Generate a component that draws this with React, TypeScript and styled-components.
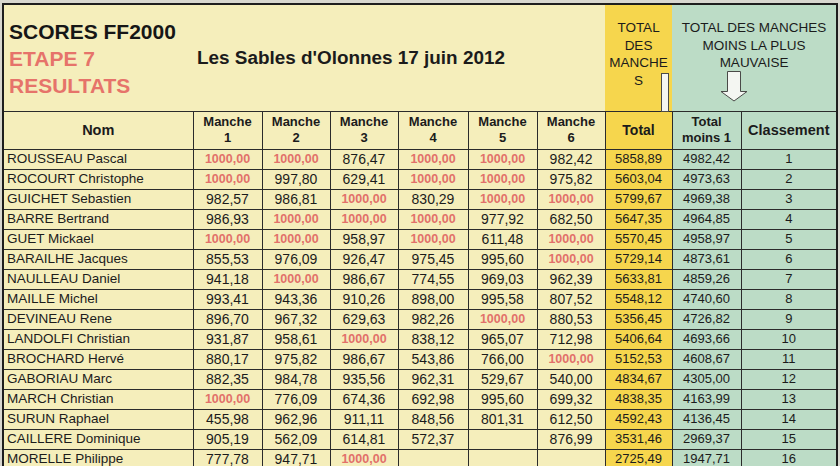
import React from "react";
import styled, { createGlobalStyle } from "styled-components";

type Tone = "paper" | "gold" | "mint";

const tones: Record<Tone, string> = {
  paper: "#f5eebb",
  gold: "#f6d64d",
  mint: "#bcdcc6",
};

const red = "#e2716a";

type Row = {
  name: string;
  manches: string[];
  total: string;
  moins: string;
  rank: number;
};

const rows: Row[] = [
  { name: "ROUSSEAU Pascal", manches: ["1000,00", "1000,00", "876,47", "1000,00", "1000,00", "982,42"], total: "5858,89", moins: "4982,42", rank: 1 },
  { name: "ROCOURT Christophe", manches: ["1000,00", "997,80", "629,41", "1000,00", "1000,00", "975,82"], total: "5603,04", moins: "4973,63", rank: 2 },
  { name: "GUICHET Sebastien", manches: ["982,57", "986,81", "1000,00", "830,29", "1000,00", "1000,00"], total: "5799,67", moins: "4969,38", rank: 3 },
  { name: "BARRE Bertrand", manches: ["986,93", "1000,00", "1000,00", "1000,00", "977,92", "682,50"], total: "5647,35", moins: "4964,85", rank: 4 },
  { name: "GUET Mickael", manches: ["1000,00", "1000,00", "958,97", "1000,00", "611,48", "1000,00"], total: "5570,45", moins: "4958,97", rank: 5 },
  { name: "BARAILHE Jacques", manches: ["855,53", "976,09", "926,47", "975,45", "995,60", "1000,00"], total: "5729,14", moins: "4873,61", rank: 6 },
  { name: "NAULLEAU Daniel", manches: ["941,18", "1000,00", "986,67", "774,55", "969,03", "962,39"], total: "5633,81", moins: "4859,26", rank: 7 },
  { name: "MAILLE Michel", manches: ["993,41", "943,36", "910,26", "898,00", "995,58", "807,52"], total: "5548,12", moins: "4740,60", rank: 8 },
  { name: "DEVINEAU Rene", manches: ["896,70", "967,32", "629,63", "982,26", "1000,00", "880,53"], total: "5356,45", moins: "4726,82", rank: 9 },
  { name: "LANDOLFI Christian", manches: ["931,87", "958,61", "1000,00", "838,12", "965,07", "712,98"], total: "5406,64", moins: "4693,66", rank: 10 },
  { name: "BROCHARD Hervé", manches: ["880,17", "975,82", "986,67", "543,86", "766,00", "1000,00"], total: "5152,53", moins: "4608,67", rank: 11 },
  { name: "GABORIAU Marc", manches: ["882,35", "984,78", "935,56", "962,31", "529,67", "540,00"], total: "4834,67", moins: "4305,00", rank: 12 },
  { name: "MARCH Christian", manches: ["1000,00", "776,09", "674,36", "692,98", "995,60", "699,32"], total: "4838,35", moins: "4163,99", rank: 13 },
  { name: "SURUN Raphael", manches: ["455,98", "962,96", "911,11", "848,56", "801,31", "612,50"], total: "4592,43", moins: "4136,45", rank: 14 },
  { name: "CAILLERE Dominique", manches: ["905,19", "562,09", "614,81", "572,37", "", "876,99"], total: "3531,46", moins: "2969,37", rank: 15 },
  { name: "MORELLE Philippe", manches: ["777,78", "947,71", "1000,00", "", "", ""], total: "2725,49", moins: "1947,71", rank: 16 },
];

const widths = [190, 69, 68, 68, 70, 69, 68, 67, 69, 96];

const App: React.FC = () => {
  return (
    <Page>
      <GlobalStyle />
      <Sheet>
        <colgroup>
          {widths.map((w, i) => (
            <col key={i} style={{ width: w }} />
          ))}
        </colgroup>
        <tbody>
          <TitleRow>
            <TitleCell>
              <Heading>SCORES FF2000</Heading>
              <Heading $red>ETAPE 7</Heading>
              <Heading $red>RESULTATS</Heading>
            </TitleCell>
            <PlaceCell colSpan={6}>Les Sables d'Olonnes 17 juin 2012</PlaceCell>
            <NoteCell $tone="gold">
              TOTAL
              <br />
              DES
              <br />
              MANCHE
              <br />S
              <Bar />
            </NoteCell>
            <NoteCell $tone="mint" colSpan={2}>
              TOTAL DES MANCHES
              <br />
              MOINS LA PLUS
              <br />
              MAUVAISE
              <DownArrow viewBox="0 0 28 31">
                <path
                  d="M7.5 0.5 H20.5 V20.5 H27 L14 30 L1 20.5 H7.5 Z"
                  fill="#f4f6f2"
                  stroke="#4a4a48"
                  strokeWidth="1"
                />
              </DownArrow>
            </NoteCell>
          </TitleRow>
          <HeadRow>
            <HeadCell $size={14.5}>Nom</HeadCell>
            {[1, 2, 3, 4, 5, 6].map((n) => (
              <HeadCell key={n}>
                Manche
                <br />
                {n}
              </HeadCell>
            ))}
            <HeadCell $tone="gold" $size={14}>
              Total
            </HeadCell>
            <HeadCell $tone="mint">
              Total
              <br />
              moins 1
            </HeadCell>
            <HeadCell $tone="mint" $size={14.5}>
              Classement
            </HeadCell>
          </HeadRow>
          {rows.map((r) => (
            <DataRow key={r.rank}>
              <NameCell>{r.name}</NameCell>
              {r.manches.map((m, i) => (
                <NumCell key={i} $best={m === "1000,00"}>
                  {m}
                </NumCell>
              ))}
              <NumCell $tone="gold" $small>
                {r.total}
              </NumCell>
              <NumCell $tone="mint" $small>
                {r.moins}
              </NumCell>
              <NumCell $tone="mint" $small>
                {r.rank}
              </NumCell>
            </DataRow>
          ))}
        </tbody>
      </Sheet>
    </Page>
  );
};
export default App;

const GlobalStyle = createGlobalStyle`
  html,
  body {
    margin: 0;
    padding: 0;
  }
  body {
    background: #d8d7cf;
    font-family: "Liberation Sans", Arial, sans-serif;
    color: #1b1b1b;
    overflow: hidden;
  }
`;

const Page = styled.div`
  width: 840px;
  height: 466px;
  overflow: hidden;
  padding: 3px 0 0 2px;
  box-sizing: border-box;
`;

const Sheet = styled.table`
  width: 835px;
  border-collapse: collapse;
  table-layout: fixed;
  border: 2px solid #1e1e1e;
`;

const TitleRow = styled.tr`
  height: 107px;
`;

const TitleCell = styled.td`
  background: ${tones.paper};
  vertical-align: top;
  padding: 13px 0 0 5px;
  border-bottom: 1px solid #2b2b2b;
`;

const Heading = styled.div<{ $red?: boolean }>`
  font-size: 21px;
  line-height: 27px;
  font-weight: bold;
  white-space: nowrap;
  color: ${(p) => (p.$red ? "#e6736a" : "#161616")};
`;

const PlaceCell = styled.td`
  background: ${tones.paper};
  vertical-align: middle;
  padding: 0 0 0 4px;
  font-size: 18.9px;
  font-weight: bold;
  white-space: nowrap;
  border-bottom: 1px solid #2b2b2b;
`;

const NoteCell = styled.td<{ $tone: Tone }>`
  position: relative;
  background: ${(p) => tones[p.$tone]};
  vertical-align: top;
  text-align: center;
  padding: 14px 0 0;
  font-size: 13.5px;
  line-height: 17.5px;
  white-space: nowrap;
  border-bottom: 1px solid #2b2b2b;
`;

const Bar = styled.span`
  position: absolute;
  left: 56px;
  top: 68px;
  bottom: -1px;
  width: 8px;
  box-sizing: border-box;
  background: #f4f6f2;
  border: 1px solid #4a4a48;
`;

const DownArrow = styled.svg`
  position: absolute;
  left: 48px;
  top: 66px;
  width: 28px;
  height: 31px;
`;

const HeadRow = styled.tr`
  height: 38px;
`;

const HeadCell = styled.th<{ $tone?: Tone; $size?: number }>`
  background: ${(p) => tones[p.$tone ?? "paper"]};
  border: 1px solid #2b2b2b;
  padding: 0;
  font-size: ${(p) => p.$size ?? 13}px;
  line-height: 16px;
  font-weight: bold;
  text-align: center;
  vertical-align: middle;
  white-space: nowrap;
`;

const DataRow = styled.tr`
  height: 20px;
`;

const NameCell = styled.td`
  background: ${tones.paper};
  border: 1px solid #2b2b2b;
  padding: 0 0 0 3px;
  height: 19px;
  font-size: 13.5px;
  line-height: 18px;
  white-space: nowrap;
  overflow: hidden;
`;

const NumCell = styled.td<{ $tone?: Tone; $best?: boolean; $small?: boolean }>`
  background: ${(p) => tones[p.$tone ?? "paper"]};
  border: 1px solid #2b2b2b;
  padding: 0;
  height: 19px;
  text-align: center;
  white-space: nowrap;
  line-height: 18px;
  font-size: ${(p) => (p.$best ? 12.5 : p.$small ? 13 : 14)}px;
  font-weight: ${(p) => (p.$best ? "bold" : "normal")};
  color: ${(p) => (p.$best ? red : "#1b1b1b")};
`;
